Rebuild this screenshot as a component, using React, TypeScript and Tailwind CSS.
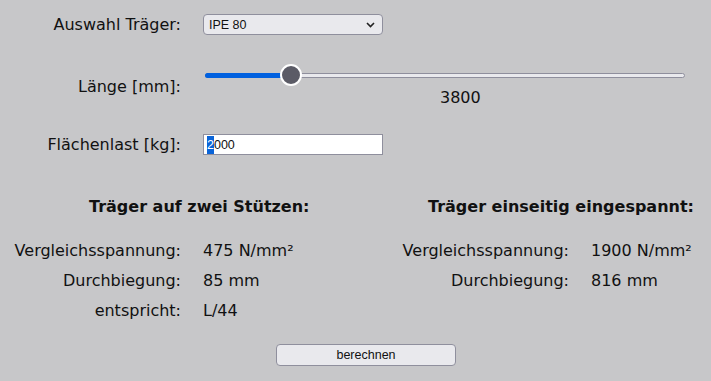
const label = "text-right text-[#111]";

function Slider() {
  return (
    <div className="relative w-[484px] h-[20px]">
      <div className="absolute left-[2px] right-[2px] top-[8px] h-[5px] rounded-full bg-[#e9e9ed] border border-[#8f8f9d]" />
      <div className="absolute left-[2px] w-[88px] top-[8px] h-[5px] rounded-full bg-[#0060df]" />
      <div className="absolute left-[77px] top-0 w-[22px] h-[22px] -mt-[1px] rounded-full bg-[#5b5b66] border-2 border-white" />
    </div>
  );
}

function ResultCol({
  title,
  titlePad,
  labelW,
  rows,
}: {
  title: string;
  titlePad: string;
  labelW: string;
  rows: [string, string][];
}) {
  return (
    <div>
      <div className={`font-bold ${titlePad}`}>{title}</div>
      <div className="mt-[26px] flex flex-col gap-[12px]">
        {rows.map(([k, v]) => (
          <div key={k} className="flex">
            <div className={`${labelW} ${label}`}>{k}</div>
            <div className="ml-[22px]">{v}</div>
          </div>
        ))}
      </div>
    </div>
  );
}

export default function App() {
  return (
    <div
      className="w-[711px] h-[381px] bg-[#c7c7c9] text-[#111] text-[16px] leading-[18px] overflow-hidden"
      style={{ fontFamily: '"DejaVu Sans", Verdana, sans-serif' }}
    >
      {/* Eingaben */}
      <div className="flex items-center pt-[14px]">
        <div className={`w-[181px] ${label}`}>Auswahl Träger:</div>
        <div className="ml-[22px] w-[180px] h-[21px] flex items-center justify-between rounded-[4px] border border-[#8f8f9d] bg-[#e9e9ed] pl-[5px] pr-[7px] text-[12.5px] font-['Liberation_Sans',Arial,sans-serif]">
          <span>IPE 80</span>
          <svg width="9" height="6" viewBox="0 0 9 6">
            <path d="M1 1l3.5 3.5L8 1" fill="none" stroke="#222" strokeWidth="1.6" />
          </svg>
        </div>
      </div>

      <div className="flex items-center mt-[30px]">
        <div className={`w-[181px] ${label} pt-[2px]`}>Länge [mm]:</div>
        <div className="ml-[22px] flex flex-col">
          <Slider />
          <div className="mt-[4px] pl-[237px]">3800</div>
        </div>
      </div>

      <div className="flex items-center mt-[27px]">
        <div className={`w-[181px] ${label}`}>Flächenlast [kg]:</div>
        <div className="ml-[22px] w-[180px] h-[21px] flex items-center border border-[#8f8f9d] bg-white pl-[3px] text-[12.5px] font-['Liberation_Sans',Arial,sans-serif]">
          <span className="bg-[#0a64d8] text-white">2</span>
          <span>000</span>
        </div>
      </div>

      {/* Ergebnisse */}
      <div className="flex mt-[43px]">
        <div className="w-[355px]">
          <ResultCol
            title="Träger auf zwei Stützen:"
            titlePad="pl-[89px]"
            labelW="w-[181px]"
            rows={[
              ["Vergleichsspannung:", "475 N/mm²"],
              ["Durchbiegung:", "85 mm"],
              ["entspricht:", "L/44"],
            ]}
          />
        </div>
        <div className="flex-1">
          <ResultCol
            title="Träger einseitig eingespannt:"
            titlePad="pl-[73px]"
            labelW="w-[214px]"
            rows={[
              ["Vergleichsspannung:", "1900 N/mm²"],
              ["Durchbiegung:", "816 mm"],
            ]}
          />
        </div>
      </div>

      <button className="block ml-[276px] mt-[24px] w-[180px] h-[22px] rounded-[4px] border border-[#8f8f9d] bg-[#e9e9ed] text-[12.5px] leading-none font-['Liberation_Sans',Arial,sans-serif]">
        berechnen
      </button>
    </div>
  );
}
